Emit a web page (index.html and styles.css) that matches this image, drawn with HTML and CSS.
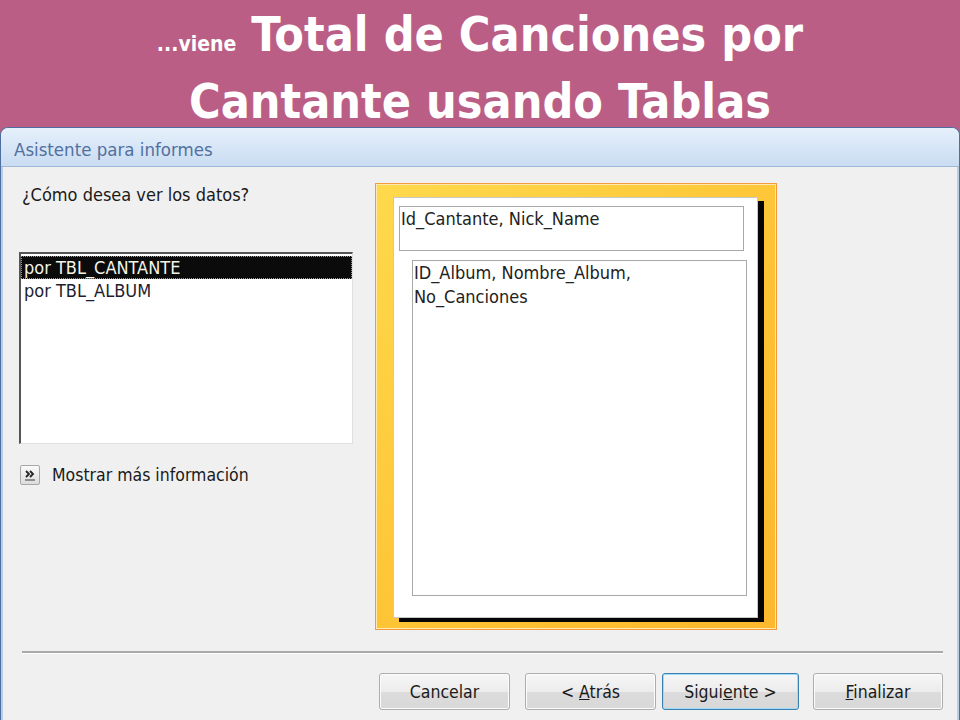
FILE: index.html
```html
<!DOCTYPE html>
<html lang="es">
<head>
    <meta charset="UTF-8">
    <title>Total de Canciones por Cantante usando Tablas</title>
    <link rel="stylesheet" href="styles.css">
</head>
<body>
    <div class="banner">
        <div class="line"><span class="small">...viene</span> Total de Canciones por</div>
        <div class="line">Cantante usando Tablas</div>
    </div>

    <div class="window">
        <div class="titlebar">Asistente para informes</div>

        <div class="content">
            <div class="left">
                <p class="question">¿Cómo desea ver los datos?</p>
                <div class="listbox">
                    <div class="item selected">por TBL_CANTANTE</div>
                    <div class="item">por TBL_ALBUM</div>
                </div>
                <div class="more">
                    <span class="more-btn">
                        <svg width="14" height="14" viewBox="0 0 14 14">
                            <path d="M3 3 L6 6 L3 9 M7 3 L10 6 L7 9" fill="none" stroke="#222" stroke-width="1.8"/>
                            <path d="M2 12 H12" stroke="#555" stroke-width="1.2"/>
                        </svg>
                    </span>
                    Mostrar más información
                </div>
            </div>

            <div class="preview">
                <div class="page">
                    <div class="group-box">Id_Cantante, Nick_Name</div>
                    <div class="detail-box">ID_Album, Nombre_Album,<br>No_Canciones</div>
                </div>
            </div>
        </div>

        <div class="footer">
            <div class="buttons">
                <button class="btn">Cancelar</button>
                <button class="btn">&lt; <u>A</u>trás</button>
                <button class="btn default">Sigui<u>e</u>nte &gt;</button>
                <button class="btn"><u>F</u>inalizar</button>
            </div>
        </div>
    </div>
</body>
</html>
```

FILE: styles.css
```css
body {
    margin: 0;
    width: 960px;
    height: 720px;
    overflow: hidden;
    background: #bb5e85;
    font-family: "DejaVu Sans Condensed", "DejaVu Sans", sans-serif;
}

.banner {
    height: 127px;
    color: white;
    text-align: center;
    font-family: "DejaVu Sans Condensed", "DejaVu Sans", sans-serif;
    font-weight: bold;
    font-size: 48px;
    line-height: 57px;
    padding-top: 6px;
    box-sizing: border-box;
}
.banner .small { font-size: 21px; }

.window {
    height: 593px;
    background: #f0f0f0;
    border: 1px solid #4d6e9e;
    border-bottom: none;
    border-radius: 8px 8px 0 0;
    box-shadow: inset 2px 0 0 #b9cde6, inset -2px 0 0 #b9cde6;
    display: flex;
    flex-direction: column;
    box-sizing: border-box;
}

.titlebar {
    height: 38px;
    line-height: 44px;
    padding-left: 13px;
    font-size: 18.5px;
    color: #52709f;
    background: linear-gradient(#e6f0fb, #d4e4f6 60%, #cadcf2);
    border-radius: 7px 7px 0 0;
    border-bottom: 1px solid #9fb8d8;
}

.content {
    display: flex;
    flex: 1;
    padding: 16px 0 0 18px;
}

.left { width: 334px; }

.question {
    margin: 0 0 0 3px;
    height: 69px;
    font-size: 18px;
    line-height: 24px;
    color: #1a1a1a;
}

.listbox {
    height: 192px;
    background: white;
    border-top: 2px solid #555;
    border-left: 2px solid #555;
    border-right: 1px solid #e0e0e0;
    border-bottom: 1px solid #e0e0e0;
    padding-top: 2px;
    box-sizing: border-box;
}
.item {
    height: 23px;
    line-height: 23px;
    padding-left: 3px;
    font-size: 18px;
    color: #1e1e2e;
}
.item.selected {
    background: #0b0b0b;
    color: #f4f4e8;
    outline: 1px dotted #999;
    outline-offset: -1px;
}

.more {
    display: flex;
    align-items: center;
    gap: 12px;
    margin-top: 21px;
    margin-left: 1px;
    font-size: 17.5px;
    color: #1a1a1a;
}
.more-btn {
    width: 18px;
    height: 18px;
    display: flex;
    align-items: center;
    justify-content: center;
    border: 1px solid #a8a8a8;
    border-radius: 2px;
    background: linear-gradient(#fafafa, #dcdcdc);
}

.preview {
    margin-left: 22px;
    width: 402px;
    height: 447px;
    border: 1px solid #f39a3a;
    box-shadow: inset 0 0 0 1px #ffe9b0;
    background: linear-gradient(135deg, #ffd94c, #fdc233 60%, #fcb92e);
    padding: 13px 0 0 17px;
    box-sizing: border-box;
}

.page {
    width: 365px;
    height: 421px;
    background: white;
    border: 1px solid #c8c8c8;
    box-shadow: 6px 4px 0 #050505;
    box-sizing: border-box;
    padding: 8px 0 0 5px;
    font-size: 18px;
    color: #222;
}
.group-box {
    width: 345px;
    height: 45px;
    border: 1px solid #a8a8a8;
    box-sizing: border-box;
    padding: 0 0 0 1px;
    line-height: 24px;
}
.detail-box {
    width: 335px;
    height: 336px;
    margin: 9px 0 0 13px;
    border: 1px solid #a8a8a8;
    box-sizing: border-box;
    padding: 0 0 0 1px;
    line-height: 24px;
}

.footer {
    margin: 0 16px 0 21px;
    border-top: 2px solid #a9a9a9;
    box-shadow: inset 0 1px 0 #fff;
    padding-top: 20px;
    height: 69px;
    box-sizing: border-box;
}
.buttons {
    display: flex;
    justify-content: flex-end;
}
.btn {
    height: 37px;
    width: 131px;
    margin-left: 15px;
    border: 1px solid #adadad;
    border-radius: 3px;
    background: linear-gradient(#f6f6f6, #ececec 50%, #dcdcdc 51%, #d8d8d8);
    box-shadow: inset 0 0 0 1px #fcfcfc;
    font-family: "DejaVu Sans Condensed", "DejaVu Sans", sans-serif;
    font-size: 17.5px;
    color: #1a1a1a;
    padding: 0;
}
.btn:nth-child(3) { margin-left: 6px; width: 137px; }
.btn:nth-child(4) { margin-left: 14px; width: 130px; }
.btn.default {
    border-color: #3c7fb1;
    box-shadow: inset 0 0 0 1px #9fdcf7;
}
```
